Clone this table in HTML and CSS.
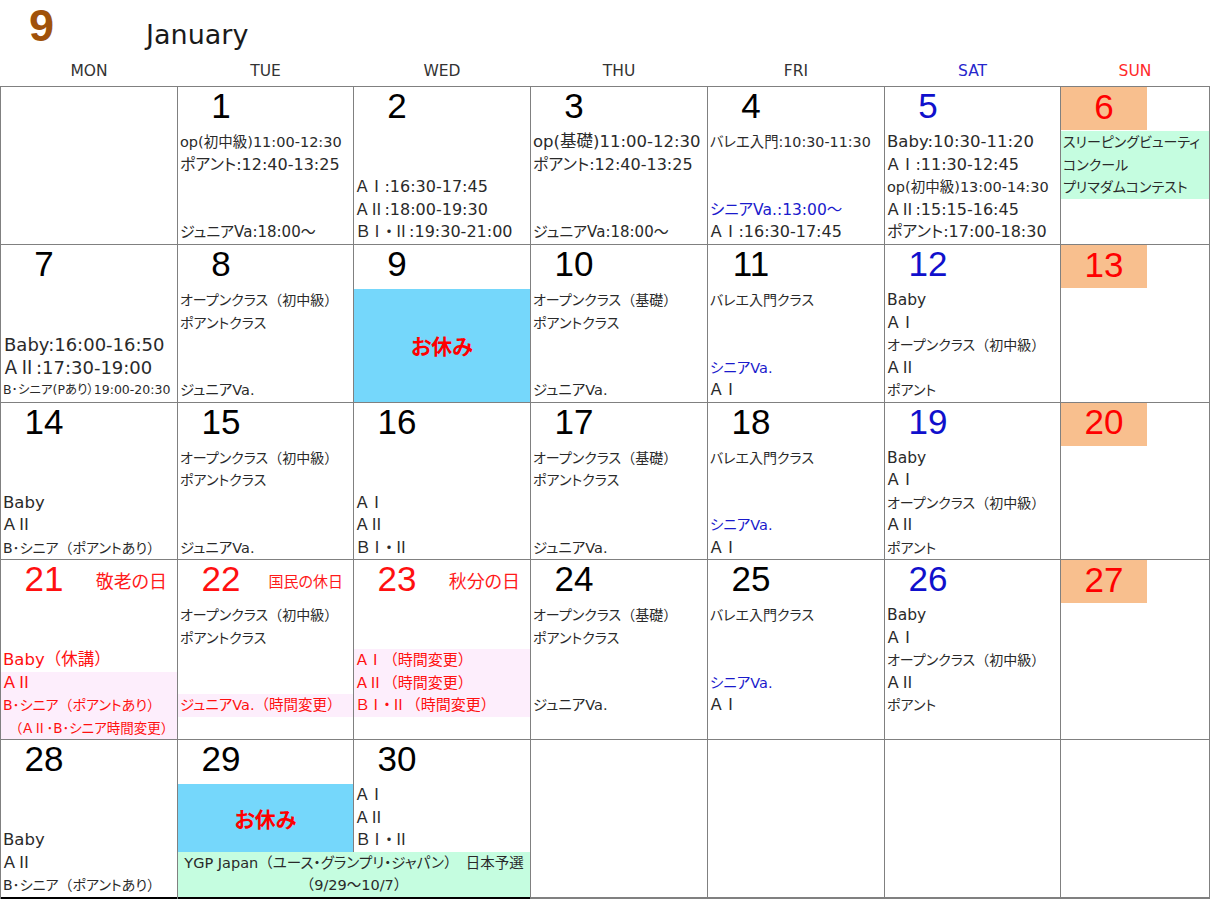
FILE: index.html
```html
<!DOCTYPE html>
<html lang="ja">
<head>
<meta charset="utf-8">
<title>9 January</title>
<link rel="stylesheet" href="styles.css">
</head>
<body>
<header class="top">
  <div class="mnum">9</div>
  <div class="mname">January</div>
</header>
<div class="dow">
  <div>MON</div><div>TUE</div><div>WED</div><div>THU</div><div>FRI</div><div class="sat">SAT</div><div class="sun">SUN</div>
</div>
<div class="cal">
  <!-- week 1 -->
  <div class="week">
    <div class="cell"></div>
    <div class="cell">
      <div class="date"><span class="n">1</span></div>
      <div class="ln s145">op(初中級)11:00-12:30</div>
      <div class="ln">ポアント:12:40-13:25</div>
      <div class="ln"></div><div class="ln"></div>
      <div class="ln s15">ジュニアVa:18:00〜</div>
    </div>
    <div class="cell">
      <div class="date"><span class="n">2</span></div>
      <div class="ln"></div><div class="ln"></div>
      <div class="ln"><span class="r">ＡⅠ</span>:16:30-17:45</div>
      <div class="ln"><span class="r">ＡⅡ</span>:18:00-19:30</div>
      <div class="ln"><span class="r">ＢⅠ・Ⅱ</span>:19:30-21:00</div>
    </div>
    <div class="cell">
      <div class="date"><span class="n">3</span></div>
      <div class="ln s165">op(基礎)11:00-12:30</div>
      <div class="ln">ポアント:12:40-13:25</div>
      <div class="ln"></div><div class="ln"></div>
      <div class="ln s15">ジュニアVa:18:00〜</div>
    </div>
    <div class="cell">
      <div class="date"><span class="n">4</span></div>
      <div class="ln s143">バレエ入門:10:30-11:30</div>
      <div class="ln"></div><div class="ln"></div>
      <div class="ln blue s155">シニアVa.:13:00〜</div>
      <div class="ln"><span class="r">ＡⅠ</span>:16:30-17:45</div>
    </div>
    <div class="cell sat">
      <div class="date"><span class="n">5</span></div>
      <div class="ln s165">Baby:10:30-11:20</div>
      <div class="ln"><span class="r">ＡⅠ</span>:11:30-12:45</div>
      <div class="ln s145">op(初中級)13:00-14:30</div>
      <div class="ln"><span class="r">ＡⅡ</span>:15:15-16:45</div>
      <div class="ln">ポアント:17:00-18:30</div>
    </div>
    <div class="cell sun">
      <div class="date"><span class="n">6</span></div>
      <div class="ln gr k">スリーピングビューティ</div>
      <div class="ln gr k">コンクール</div>
      <div class="ln gr k">プリマダムコンテスト</div>
    </div>
  </div>

  <!-- week 2 -->
  <div class="week">
    <div class="cell">
      <div class="date"><span class="n">7</span></div>
      <div class="ln"></div><div class="ln"></div>
      <div class="ln xl">Baby:16:00-16:50</div>
      <div class="ln xl"><span class="r">ＡⅡ</span>:17:30-19:00</div>
      <div class="ln xs">B･シニア(Pあり）19:00-20:30</div>
    </div>
    <div class="cell">
      <div class="date"><span class="n">8</span></div>
      <div class="ln k">オープンクラス<span class="p">（</span>初中級<span class="p">）</span></div>
      <div class="ln k">ポアントクラス</div>
      <div class="ln"></div><div class="ln"></div>
      <div class="ln s145">ジュニアVa.</div>
    </div>
    <div class="cell">
      <div class="date"><span class="n">9</span></div>
      <div class="off l5">お休み</div>
    </div>
    <div class="cell">
      <div class="date"><span class="n">10</span></div>
      <div class="ln k">オープンクラス<span class="p">（</span>基礎<span class="p">）</span></div>
      <div class="ln k">ポアントクラス</div>
      <div class="ln"></div><div class="ln"></div>
      <div class="ln s145">ジュニアVa.</div>
    </div>
    <div class="cell">
      <div class="date"><span class="n">11</span></div>
      <div class="ln k">バレエ入門クラス</div>
      <div class="ln"></div><div class="ln"></div>
      <div class="ln blue s145">シニアVa.</div>
      <div class="ln"><span class="r">ＡⅠ</span></div>
    </div>
    <div class="cell sat">
      <div class="date"><span class="n">12</span></div>
      <div class="ln s155">Baby</div>
      <div class="ln"><span class="r">ＡⅠ</span></div>
      <div class="ln k">オープンクラス<span class="p">（</span>初中級<span class="p">）</span></div>
      <div class="ln"><span class="r">ＡⅡ</span></div>
      <div class="ln k">ポアント</div>
    </div>
    <div class="cell sun">
      <div class="date"><span class="n">13</span></div>
    </div>
  </div>

  <!-- week 3 -->
  <div class="week">
    <div class="cell">
      <div class="date"><span class="n">14</span></div>
      <div class="ln"></div><div class="ln"></div>
      <div class="ln s165">Baby</div>
      <div class="ln s165"><span class="r">ＡⅡ</span></div>
      <div class="ln k">B･シニア<span class="p">（</span>ポアントあり<span class="p">）</span></div>
    </div>
    <div class="cell">
      <div class="date"><span class="n">15</span></div>
      <div class="ln k">オープンクラス<span class="p">（</span>初中級<span class="p">）</span></div>
      <div class="ln k">ポアントクラス</div>
      <div class="ln"></div><div class="ln"></div>
      <div class="ln s145">ジュニアVa.</div>
    </div>
    <div class="cell">
      <div class="date"><span class="n">16</span></div>
      <div class="ln"></div><div class="ln"></div>
      <div class="ln"><span class="r">ＡⅠ</span></div>
      <div class="ln"><span class="r">ＡⅡ</span></div>
      <div class="ln"><span class="r">ＢⅠ・Ⅱ</span></div>
    </div>
    <div class="cell">
      <div class="date"><span class="n">17</span></div>
      <div class="ln k">オープンクラス<span class="p">（</span>基礎<span class="p">）</span></div>
      <div class="ln k">ポアントクラス</div>
      <div class="ln"></div><div class="ln"></div>
      <div class="ln s145">ジュニアVa.</div>
    </div>
    <div class="cell">
      <div class="date"><span class="n">18</span></div>
      <div class="ln k">バレエ入門クラス</div>
      <div class="ln"></div><div class="ln"></div>
      <div class="ln blue s145">シニアVa.</div>
      <div class="ln"><span class="r">ＡⅠ</span></div>
    </div>
    <div class="cell sat">
      <div class="date"><span class="n">19</span></div>
      <div class="ln s155">Baby</div>
      <div class="ln"><span class="r">ＡⅠ</span></div>
      <div class="ln k">オープンクラス<span class="p">（</span>初中級<span class="p">）</span></div>
      <div class="ln"><span class="r">ＡⅡ</span></div>
      <div class="ln k">ポアント</div>
    </div>
    <div class="cell sun">
      <div class="date"><span class="n">20</span></div>
    </div>
  </div>

  <!-- week 4 -->
  <div class="week">
    <div class="cell hol">
      <div class="date"><span class="n">21</span><span class="hname">敬老の日</span></div>
      <div class="ln"></div><div class="ln"></div>
      <div class="ln s165 red">Baby<span class="p">（</span>休講<span class="p">）</span></div>
      <div class="ln s165 red pk"><span class="r">ＡⅡ</span></div>
      <div class="ln k red pk">B･シニア<span class="p">（</span>ポアントあり<span class="p">）</span></div>
      <div class="ln sm red pk ind"><span class="p">（</span><span class="r">ＡⅡ</span>･B･シニア時間変更<span class="p">）</span></div>
    </div>
    <div class="cell hol">
      <div class="date"><span class="n">22</span><span class="hname small">国民の休日</span></div>
      <div class="ln k">オープンクラス<span class="p">（</span>初中級<span class="p">）</span></div>
      <div class="ln k">ポアントクラス</div>
      <div class="ln"></div><div class="ln"></div>
      <div class="ln s145 red pk">ジュニアVa.<span class="p">（</span>時間変更<span class="p">）</span></div>
      <div class="ln"></div>
    </div>
    <div class="cell hol">
      <div class="date"><span class="n">23</span><span class="hname">秋分の日</span></div>
      <div class="ln"></div><div class="ln"></div>
      <div class="ln s15 red pk"><span class="r">ＡⅠ</span><span class="p">（</span>時間変更<span class="p">）</span></div>
      <div class="ln s15 red pk"><span class="r">ＡⅡ</span><span class="p">（</span>時間変更<span class="p">）</span></div>
      <div class="ln s15 red pk"><span class="r">ＢⅠ・Ⅱ</span><span class="p">（</span>時間変更<span class="p">）</span></div>
      <div class="ln"></div>
    </div>
    <div class="cell">
      <div class="date"><span class="n">24</span></div>
      <div class="ln k">オープンクラス<span class="p">（</span>基礎<span class="p">）</span></div>
      <div class="ln k">ポアントクラス</div>
      <div class="ln"></div><div class="ln"></div>
      <div class="ln s145">ジュニアVa.</div>
      <div class="ln"></div>
    </div>
    <div class="cell">
      <div class="date"><span class="n">25</span></div>
      <div class="ln k">バレエ入門クラス</div>
      <div class="ln"></div><div class="ln"></div>
      <div class="ln blue s145">シニアVa.</div>
      <div class="ln"><span class="r">ＡⅠ</span></div>
      <div class="ln"></div>
    </div>
    <div class="cell sat">
      <div class="date"><span class="n">26</span></div>
      <div class="ln s155">Baby</div>
      <div class="ln"><span class="r">ＡⅠ</span></div>
      <div class="ln k">オープンクラス<span class="p">（</span>初中級<span class="p">）</span></div>
      <div class="ln"><span class="r">ＡⅡ</span></div>
      <div class="ln k">ポアント</div>
      <div class="ln"></div>
    </div>
    <div class="cell sun">
      <div class="date"><span class="n">27</span></div>
    </div>
  </div>

  <!-- week 5 -->
  <div class="week w5">
    <div class="cell r2 bk">
      <div class="date"><span class="n">28</span></div>
      <div class="ln"></div><div class="ln"></div>
      <div class="ln s165">Baby</div>
      <div class="ln s165"><span class="r">ＡⅡ</span></div>
      <div class="ln k">B･シニア<span class="p">（</span>ポアントあり<span class="p">）</span></div>
    </div>
    <div class="cell">
      <div class="date"><span class="n">29</span></div>
      <div class="off l3">お休み</div>
    </div>
    <div class="cell">
      <div class="date"><span class="n">30</span></div>
      <div class="ln"><span class="r">ＡⅠ</span></div>
      <div class="ln"><span class="r">ＡⅡ</span></div>
      <div class="ln"><span class="r">ＢⅠ・Ⅱ</span></div>
    </div>
    <div class="cell r2"></div>
    <div class="cell r2"></div>
    <div class="cell r2"></div>
    <div class="cell r2"></div>
    <div class="band bk">
      <div class="ln">YGP Japan<span class="p">（</span>ユース・グランプリ・ジャパン<span class="p">）</span>　日本予選</div>
      <div class="ln"><span class="p">（</span>9/29〜10/7<span class="p">）</span></div>
    </div>
  </div>
</div>
</body>
</html>
```

FILE: styles.css
```css
* { box-sizing: border-box; }

body {
  margin: 0;
  background: #ffffff;
  font-family: "DejaVu Sans", "Noto Sans CJK JP", sans-serif;
  font-feature-settings: "palt";
  color: #2a2a2a;
}

.top {
  height: 60px;
  display: flex;
  align-items: flex-start;
}

.mnum {
  font-family: "Liberation Sans", sans-serif;
  font-weight: bold;
  font-size: 45px;
  line-height: 48px;
  color: #a0520a;
  margin: 2px 0 0 29px;
}

.mname {
  font-family: "DejaVu Sans", sans-serif;
  font-size: 27px;
  line-height: 30px;
  color: #1a1a1a;
  margin: 20px 0 0 92px;
}

.dow {
  display: grid;
  grid-template-columns: 176px 175px 176px 176px 176px 175px 148px;
  column-gap: 1px;
  padding: 0 1px 5px;
  height: 26px;
  align-items: center;
  text-align: center;
  font-size: 15.5px;
  color: #333333;
}
.dow .sat { color: #2626cc; }
.dow .sun { color: #ff2a2a; }

.cal {
  display: flex;
  flex-direction: column;
  gap: 1px;
  width: 1210px;
  background: #808080;
  padding: 1px 1px 2px;
}

.week {
  display: grid;
  grid-template-columns: 176px 175px 176px 176px 176px 175px 148px;
  column-gap: 1px;
}
.week:first-child { min-height: 157px; }

.cell {
  background: #ffffff;
  display: flex;
  flex-direction: column;
}

.date {
  height: 44px;
  flex: none;
  display: flex;
  align-items: center;
}

.n {
  width: 86px;
  height: 44px;
  display: flex;
  align-items: center;
  justify-content: center;
  font-family: "Liberation Sans", sans-serif;
  font-size: 35px;
  color: #000000;
  padding-bottom: 6px;
}

.sat .n { color: #1010cc; }
.sun .n { color: #ff0000; background: #f8bf8e; height: 43px; align-self: flex-start; padding-bottom: 4px; }
.hol .n { color: #ff1010; }

.hname {
  margin-left: auto;
  margin-right: 10px;
  padding-bottom: 4px;
  font-family: "Noto Sans CJK JP", sans-serif;
  font-size: 18px;
  color: #ff1a1a;
}
.hname.small { font-size: 15px; }

.ln {
  height: 22.5px;
  line-height: 22.5px;
  flex: none;
  padding-left: 2px;
  font-size: 16px;
  white-space: nowrap;
}

.r {
  font-family: "Noto Sans CJK JP", sans-serif;
  line-height: 1;
}
.p {
  font-feature-settings: normal;
}

.k { font-size: 14px; }
.s145 { font-size: 14.5px; }
.s143 { font-size: 14.3px; }
.s15 { font-size: 15px; }
.s155 { font-size: 15.5px; }
.s165 { font-size: 16.5px; }
.sm { font-size: 13.5px; }
.xs { font-size: 12.5px; }
.xl { font-size: 18px; padding-left: 3px; }
.ind { padding-left: 8px; }

.blue { color: #1a1acc; }
.red { color: #ff1010; }
.pk { background: #fdeefc; }
.gr { background: #c5fde0; }

.off {
  background: #75d7fb;
  color: #ff0000;
  font-family: "Noto Sans CJK JP", sans-serif;
  font-weight: bold;
  font-size: 21px;
  display: flex;
  align-items: center;
  justify-content: center;
}
.off.l5 { height: 112.5px; }
.off.l3 { height: 67.5px; }

.w5 .r2 { grid-row: span 2; }

.band {
  grid-column: 2 / 4;
  grid-row: 2;
  background: #c5fde0;
  text-align: center;
}
.band .ln { padding-left: 0; font-size: 14.5px; }

.bk { box-shadow: 0 2px 0 #000000; }
```
